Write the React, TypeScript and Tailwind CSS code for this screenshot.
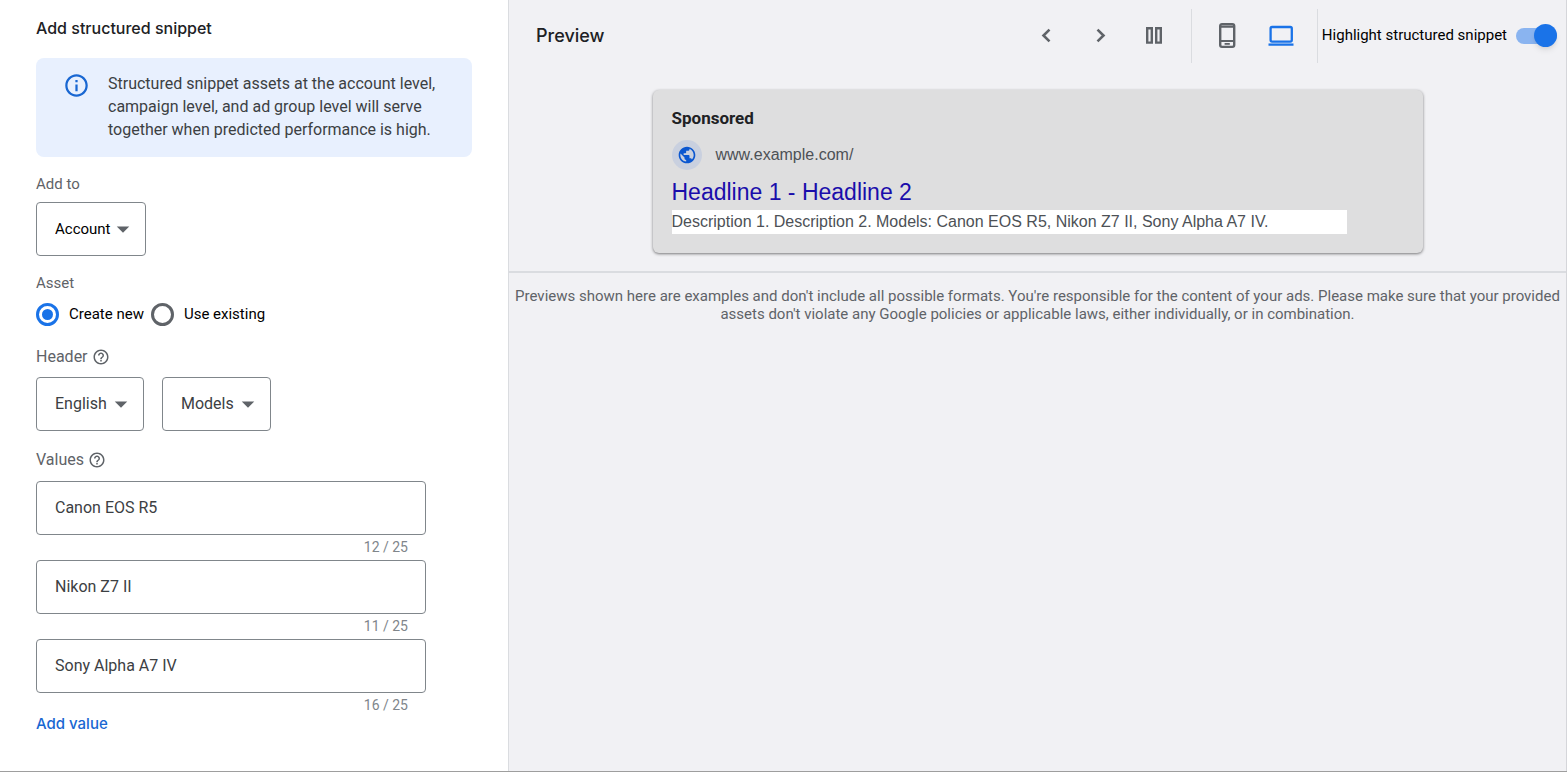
import { useState } from "react";
import type { ReactNode } from "react";
import { MdArrowDropDown, MdHelpOutline, MdInfoOutline, MdPublic } from "react-icons/md";

interface PickerProps {
  label: string;
  options: string[];
  className: string;
}

function Picker({ label, options, className }: PickerProps) {
  return (
    <div className="relative w-fit">
      <select
        aria-label={label}
        className={`block h-[54px] appearance-none rounded border border-[#80868b] bg-white pl-[18px] pr-7 ${className}`}
      >
        {options.map((option) => (
          <option key={option}>{option}</option>
        ))}
      </select>
      <MdArrowDropDown className="pointer-events-none absolute right-2 top-3 size-[30px] text-[#5f6368]" />
    </div>
  );
}

interface ValueFieldProps {
  label: string;
  value: string;
  onChange: (value: string) => void;
}

function ValueField({ label, value, onChange }: ValueFieldProps) {
  return (
    <div className="w-[390px]">
      <input
        type="text"
        aria-label={label}
        value={value}
        maxLength={25}
        onChange={(e) => onChange(e.target.value)}
        className="block h-[54px] w-full rounded border border-[#80868b] bg-white px-[18px] pb-0.5 text-base text-[#3c4043]"
      />
      <div className="pr-[18px] text-right text-sm leading-[25px] text-[#80868b]">
        {value.length} / 25
      </div>
    </div>
  );
}

interface RadioProps {
  label: string;
  checked: boolean;
  onSelect: () => void;
}

function Radio({ label, checked, onSelect }: RadioProps) {
  return (
    <label className="flex items-center gap-2.5 text-[15px] text-black">
      <input
        type="radio"
        name="asset"
        checked={checked}
        onChange={onSelect}
        className="grid size-[23px] appearance-none place-items-center rounded-full border-[3px] border-[#5f6368] before:size-[11px] before:rounded-full checked:border-[#1a73e8] checked:before:bg-[#1a73e8]"
      />
      {label}
    </label>
  );
}

function FieldHeading({ children }: { children: ReactNode }) {
  return (
    <div className="flex items-center gap-1 text-base leading-6 text-[#5f6368]">
      {children}
      <MdHelpOutline className="size-[18px]" />
    </div>
  );
}

function SnippetForm() {
  const [asset, setAsset] = useState("new");
  const [values, setValues] = useState(["Canon EOS R5", "Nikon Z7 II", "Sony Alpha A7 IV"]);

  const updateValue = (index: number, value: string) => {
    setValues(values.map((v, i) => (i === index ? value : v)));
  };

  return (
    <section className="w-[509px] shrink-0 border-r border-[#dadce0] bg-white px-9 pt-4 pb-8">
      <h1 className="font-[Inter,sans-serif] text-base font-medium leading-6 text-[#202124]">
        Add structured snippet
      </h1>

      <div className="mt-[18px] flex gap-[18px] rounded-lg bg-[#e8f0fe] pt-3.5 pr-4 pb-4 pl-[27px]">
        <MdInfoOutline className="size-[27px] shrink-0 text-[#1967d2]" />
        <p className="text-base leading-[23px] text-[#3c4043]">
          Structured snippet assets at the account level, campaign level, and ad group level will
          serve together when predicted performance is high.
        </p>
      </div>

      <div className="mt-[15px] text-[15px] leading-6 text-[#5f6368]">Add to</div>
      <div className="mt-1.5">
        <Picker
          label="Add to"
          options={["Account", "Campaign", "Ad group"]}
          className="w-[110px] text-[15px] text-black"
        />
      </div>

      <fieldset className="mt-[15px]">
        <legend className="text-[15px] leading-6 text-[#5f6368]">Asset</legend>
        <div className="mt-2 flex gap-[7px]">
          <Radio label="Create new" checked={asset === "new"} onSelect={() => setAsset("new")} />
          <Radio
            label="Use existing"
            checked={asset === "existing"}
            onSelect={() => setAsset("existing")}
          />
        </div>
      </fieldset>

      <div className="mt-[19px]">
        <FieldHeading>Header</FieldHeading>
        <div className="mt-2 flex gap-[18px]">
          <Picker
            label="Language"
            options={["English", "French"]}
            className="w-[108px] text-base text-[#3c4043]"
          />
          <Picker
            label="Header type"
            options={["Models", "Brands"]}
            className="w-[109px] text-base text-[#3c4043]"
          />
        </div>
      </div>

      <div className="mt-[17px]">
        <FieldHeading>Values</FieldHeading>
        <div className="mt-[9px]">
          {values.map((value, index) => (
            <ValueField
              key={index}
              label={`Value ${index + 1}`}
              value={value}
              onChange={(v) => updateValue(index, v)}
            />
          ))}
        </div>
        <button
          type="button"
          onClick={() => setValues([...values, ""])}
          className="block font-[Inter,sans-serif] text-[15px] font-medium leading-3 text-[#1967d2]"
        >
          Add value
        </button>
      </div>
    </section>
  );
}

function PreviewToolbar() {
  return (
    <header className="flex h-[71px] items-center pr-[9px] pl-[27px] text-[#5f6368]">
      <h2 className="flex-1 font-[Inter,sans-serif] text-lg font-medium text-[#202124]">Preview</h2>
      <div className="flex items-center gap-[27px] pr-[23px]">
        <button type="button" aria-label="Previous">
          <svg viewBox="0 0 27 27" className="size-[27px]" fill="none" stroke="currentColor" strokeWidth="2.6">
            <path d="M16.5 7.6 10.5 13.5 16.5 19.4" />
          </svg>
        </button>
        <button type="button" aria-label="Next">
          <svg viewBox="0 0 27 27" className="size-[27px]" fill="none" stroke="currentColor" strokeWidth="2.6">
            <path d="M10.5 7.6 16.5 13.5 10.5 19.4" />
          </svg>
        </button>
        <button type="button" aria-label="Side by side">
          <svg viewBox="0 0 27 27" className="size-[27px]" fill="none" stroke="currentColor" strokeWidth="2.4">
            <path d="M6.2 6.2h4.6v14.4H6.2zM15.2 6.2h4.6v14.4h-4.6z" />
          </svg>
        </button>
      </div>
      <div className="flex h-[54px] items-center gap-[27px] border-x border-[#dadce0] px-[22px]">
        <button type="button" aria-label="Mobile preview">
          <svg viewBox="0 0 27 27" className="size-[27px]" fill="none" stroke="currentColor">
            <rect x="6.2" y="2.1" width="14" height="22.8" rx="1.8" strokeWidth="2.4" />
            <path d="M6.2 4.6h14M6.2 19h14" strokeWidth="2.2" />
            <path d="M10.6 21.9h5.2" strokeWidth="1.8" />
          </svg>
        </button>
        <button type="button" aria-label="Desktop preview" className="text-[#1a73e8]">
          <svg viewBox="0 0 27 27" className="size-[27px]" fill="none" stroke="currentColor" strokeWidth="2.3">
            <rect x="2.6" y="5" width="21.2" height="14.6" rx="1.5" />
            <path d="M.5 22.6h25" />
          </svg>
        </button>
      </div>
      <label className="flex items-center gap-[9px] pl-1 text-[15px] text-black">
        Highlight structured snippet
        <input
          type="checkbox"
          role="switch"
          defaultChecked
          className="flex h-4 w-[41px] appearance-none items-center rounded-full bg-[#bdc1c6] before:size-[23px] before:rounded-full before:bg-white before:shadow checked:justify-end checked:bg-[#8ab4f0] checked:before:bg-[#1a73e8] checked:before:shadow-md"
        />
      </label>
    </header>
  );
}

function AdCard() {
  return (
    <article className="mx-auto max-w-[770px] rounded-md bg-[#dededf] px-[19px] pt-4 pb-[19px] font-['Liberation_Sans',Arial,sans-serif] shadow-[0_1px_3px_rgba(0,0,0,0.5)]">
      <div className="font-[Roboto,sans-serif] text-[17px] font-bold leading-6 text-[#202124]">
        Sponsored
      </div>
      <div className="mt-2.5 flex items-center gap-3.5">
        <span className="grid size-[30px] place-items-center rounded-full bg-[#c9d0df] text-[#0b57d0]">
          <MdPublic className="size-5" />
        </span>
        <span className="text-base text-[#4d5156]">www.example.com/</span>
      </div>
      <a href="#" className="mt-1.5 block text-[23px] leading-8 text-[#1a0dab]">
        Headline 1 - Headline 2
      </a>
      <p className="mt-0.5 mr-[57px] bg-white text-base leading-6 text-[#4d5156]">
        Description 1. Description 2. Models: Canon EOS R5, Nikon Z7 II, Sony Alpha A7 IV.
      </p>
    </article>
  );
}

export default function App() {
  return (
    <div className="flex min-h-screen border-b border-[#9e9e9e] bg-white font-[Roboto,sans-serif]">
      <SnippetForm />
      <main className="min-w-0 flex-1 border-r border-[#d5d6da] bg-[#f1f1f4]">
        <PreviewToolbar />
        <div className="border-b-2 border-[#dadce0] px-6 pt-[19px] pb-[18px]">
          <AdCard />
        </div>
        <p className="pt-3.5 text-center text-[15px] leading-[18px] text-[#5f6368]">
          Previews shown here are examples and don't include all possible formats. You're responsible
          for the content of your ads. Please make sure that your provided assets don't violate any
          Google policies or applicable laws, either individually, or in combination.
        </p>
      </main>
    </div>
  );
}
